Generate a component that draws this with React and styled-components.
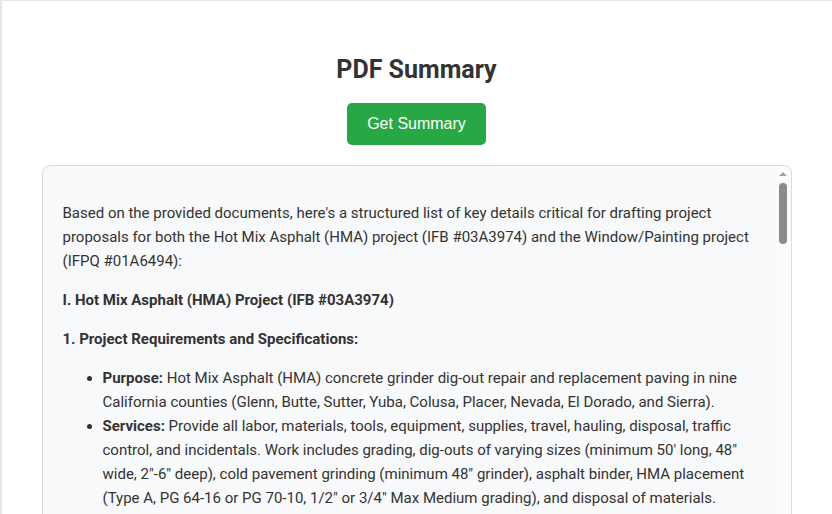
import React from 'react';
import styled, { createGlobalStyle } from 'styled-components';

const GlobalStyle = createGlobalStyle`
  html, body {
    margin: 0;
    padding: 0;
    background: #e4e6ea;
  }
  body {
    font-family: Roboto, "Liberation Sans", sans-serif;
    overflow: hidden;
  }
`;

const Page = styled.div`
  padding: 1px 0 0 2px;
  min-height: 100vh;
  box-sizing: border-box;
`;

const Panel = styled.main`
  background: #fff;
  min-height: 600px;
  padding: 36px 41px 40px 40px;
  display: flex;
  flex-direction: column;
  align-items: center;
`;

const Title = styled.h1`
  margin: 18px 0 0;
  font-family: Roboto, "Liberation Sans", sans-serif;
  font-size: 25px;
  font-weight: 700;
  color: #333;
  line-height: 30px;
`;

const Button = styled.button`
  margin-top: 18px;
  width: 139px;
  height: 42px;
  border: none;
  border-radius: 5px;
  background: #28a745;
  color: #fff;
  font-family: "Liberation Sans", Arial, sans-serif;
  font-size: 16px;
  cursor: pointer;
`;

const SummaryBox = styled.section`
  margin-top: 20px;
  width: 750px;
  height: 460px;
  box-sizing: border-box;
  border: 1px solid #dcdcdc;
  border-radius: 8px;
  background: #f8f9fa;
  display: flex;
  overflow: hidden;
`;

const Content = styled.div`
  flex: 1;
  min-width: 0;
  padding: 20px;
  overflow: hidden;
  font-family: Roboto, "Liberation Sans", sans-serif;
  font-size: 15px;
  line-height: 24px;
  color: #333;
`;

const Rail = styled.div`
  width: 15px;
  flex: none;
  background: #fbfbfb;
  display: flex;
  flex-direction: column;
  align-items: center;
`;

const ArrowUp = styled.div`
  margin-top: 6px;
  width: 0;
  height: 0;
  border-left: 4px solid transparent;
  border-right: 4px solid transparent;
  border-bottom: 4px solid #a3a3a3;
`;

const Thumb = styled.div`
  margin-top: 7px;
  width: 8px;
  height: 61px;
  border-radius: 4px;
  background: #8b8b8b;
`;

const Para = styled.p`
  margin: 15px 0;
  font-weight: ${p => (p.$bold ? 700 : 400)};
`;

const List = styled.ul`
  margin: 15px 0;
  padding-left: 40px;
  list-style: disc;
`;

const Item = styled.li`
  b { font-weight: 700; }
`;

const hmaItems = [
  ['Purpose:', 'Hot Mix Asphalt (HMA) concrete grinder dig-out repair and replacement paving in nine California counties (Glenn, Butte, Sutter, Yuba, Colusa, Placer, Nevada, El Dorado, and Sierra).'],
  ['Services:', 'Provide all labor, materials, tools, equipment, supplies, travel, hauling, disposal, traffic control, and incidentals. Work includes grading, dig-outs of varying sizes (minimum 50\' long, 48" wide, 2"-6" deep), cold pavement grinding (minimum 48" grinder), asphalt binder, HMA placement (Type A, PG 64-16 or PG 70-10, 1/2" or 3/4" Max Medium grading), and disposal of materials.'],
  ['Standards:', 'All work must conform to the current Caltrans Standard Specifications and Standard Plans.'],
  ['Traffic Control:', 'Contractor is responsible for traffic control in accordance with the CA MUTCD.'],
];

export default function App() {
  return (
    <>
      <GlobalStyle />
      <Page>
        <Panel>
          <Title>PDF Summary</Title>
          <Button>Get Summary</Button>
          <SummaryBox>
            <Content>
              <Para>
                Based on the provided documents, here's a structured list of key details critical for drafting
                project proposals for both the Hot Mix Asphalt (HMA) project (IFB #03A3974) and the
                Window/Painting project (IFPQ #01A6494):
              </Para>
              <Para $bold>I. Hot Mix Asphalt (HMA) Project (IFB #03A3974)</Para>
              <Para $bold>1. Project Requirements and Specifications:</Para>
              <List>
                {hmaItems.map(([k, v]) => (
                  <Item key={k}>
                    <b>{k}</b> {v}
                  </Item>
                ))}
              </List>
            </Content>
            <Rail>
              <ArrowUp />
              <Thumb />
            </Rail>
          </SummaryBox>
        </Panel>
      </Page>
    </>
  );
}
